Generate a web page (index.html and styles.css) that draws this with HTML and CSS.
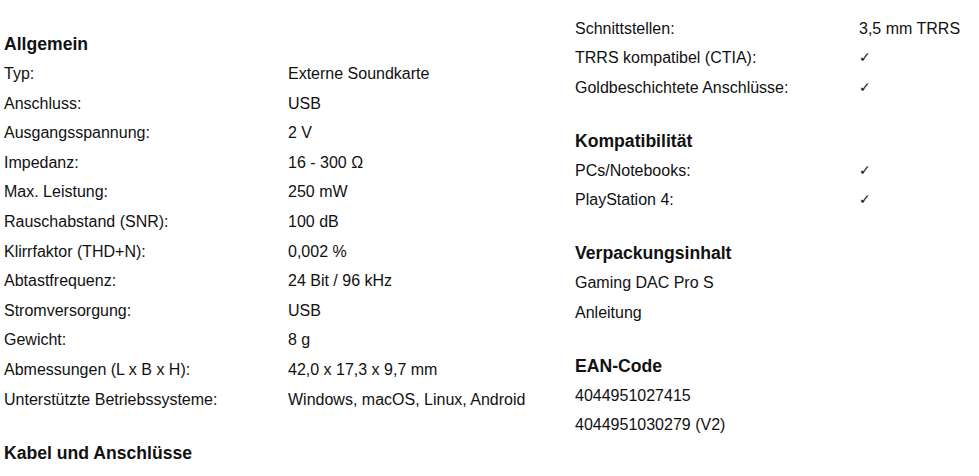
FILE: index.html
```html
<!DOCTYPE html>
<html lang="de">
<head>
<meta charset="utf-8">
<link rel="stylesheet" href="styles.css">
<title>Technische Daten</title>
</head>
<body>
<div class="specs">
  <div class="col col-left">
    <h3 class="heading first">Allgemein</h3>
    <div class="row"><span class="label">Typ:</span><span class="value">Externe Soundkarte</span></div>
    <div class="row"><span class="label">Anschluss:</span><span class="value">USB</span></div>
    <div class="row"><span class="label">Ausgangsspannung:</span><span class="value">2 V</span></div>
    <div class="row"><span class="label">Impedanz:</span><span class="value">16 - 300 Ω</span></div>
    <div class="row"><span class="label">Max. Leistung:</span><span class="value">250 mW</span></div>
    <div class="row"><span class="label">Rauschabstand (SNR):</span><span class="value">100 dB</span></div>
    <div class="row"><span class="label">Klirrfaktor (THD+N):</span><span class="value">0,002 %</span></div>
    <div class="row"><span class="label">Abtastfrequenz:</span><span class="value">24 Bit / 96 kHz</span></div>
    <div class="row"><span class="label">Stromversorgung:</span><span class="value">USB</span></div>
    <div class="row"><span class="label">Gewicht:</span><span class="value">8 g</span></div>
    <div class="row"><span class="label">Abmessungen (L x B x H):</span><span class="value">42,0 x 17,3 x 9,7 mm</span></div>
    <div class="row"><span class="label">Unterstützte Betriebssysteme:</span><span class="value">Windows, macOS, Linux, Android</span></div>
    <h3 class="heading">Kabel und Anschlüsse</h3>
  </div>
  <div class="col col-right">
    <div class="row"><span class="label">Schnittstellen:</span><span class="value">3,5 mm TRRS</span></div>
    <div class="row"><span class="label">TRRS kompatibel (CTIA):</span><span class="value check">✓</span></div>
    <div class="row"><span class="label">Goldbeschichtete Anschlüsse:</span><span class="value check">✓</span></div>
    <h3 class="heading">Kompatibilität</h3>
    <div class="row"><span class="label">PCs/Notebooks:</span><span class="value check">✓</span></div>
    <div class="row"><span class="label">PlayStation 4:</span><span class="value check">✓</span></div>
    <h3 class="heading">Verpackungsinhalt</h3>
    <div class="row"><span class="value">Gaming DAC Pro S</span></div>
    <div class="row"><span class="value">Anleitung</span></div>
    <h3 class="heading">EAN-Code</h3>
    <div class="row"><span class="value">4044951027415</span></div>
    <div class="row"><span class="value">4044951030279 (V2)</span></div>
  </div>
</div>
</body>
</html>
```
FILE: styles.css
```css
html, body {
  margin: 0;
  padding: 0;
  background: #fff;
}
body {
  font-family: "Liberation Sans", Arial, sans-serif;
  font-size: 16px;
  color: #111;
  overflow: hidden;
}
.specs {
  display: flex;
  padding-left: 4px;
}
.col-left {
  width: 571px;
  flex: none;
  padding-top: 13.5px;
}
.col-right {
  flex: 1;
  padding-top: 13.5px;
}
.heading {
  margin: 24.4px 0 0;
  font-size: 17.6px;
  font-weight: bold;
  line-height: 29px;
}
.heading.first {
  margin-top: 16.5px;
}
.row {
  display: flex;
  line-height: 29.6px;
  height: 29.6px;
}
.label {
  width: 284px;
  flex: none;
  white-space: nowrap;
}
.value {
  white-space: nowrap;
}
.check {
  font-family: "DejaVu Sans", sans-serif;
  font-size: 14px;
  font-weight: bold;
}
```
